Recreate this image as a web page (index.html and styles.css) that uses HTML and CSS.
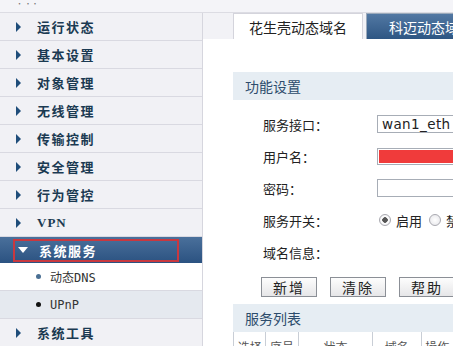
FILE: index.html
```html
<!DOCTYPE html>
<html lang="zh-CN">
<head>
    <meta charset="UTF-8">
    <title>动态DNS</title>
    <link rel="stylesheet" href="styles.css">
</head>
<body>
    <div class="topbar"><span class="dots">· ··</span></div>

    <div class="main">
        <div class="sidebar">
            <div class="menu-item"><span class="arrow"></span>运行状态</div>
            <div class="menu-item"><span class="arrow"></span>基本设置</div>
            <div class="menu-item"><span class="arrow"></span>对象管理</div>
            <div class="menu-item"><span class="arrow"></span>无线管理</div>
            <div class="menu-item"><span class="arrow"></span>传输控制</div>
            <div class="menu-item"><span class="arrow"></span>安全管理</div>
            <div class="menu-item"><span class="arrow"></span>行为管控</div>
            <div class="menu-item latin"><span class="arrow"></span>VPN</div>
            <div class="menu-item open">
                <div class="mark"><span class="arrow-down"></span>系统服务</div>
            </div>
            <div class="sub-item"><span class="bullet"></span>动态DNS</div>
            <div class="sub-item current"><span class="bullet"></span>UPnP</div>
            <div class="menu-item"><span class="arrow"></span>系统工具</div>
        </div>

        <div class="content">
            <div class="tabs">
                <div class="tab active">花生壳动态域名</div>
                <div class="tab">科迈动态域名</div>
            </div>

            <div class="panel">
                <div class="section-title">功能设置</div>

                <div class="form">
                    <div class="label">服务接口：</div>
                    <div class="field"><span class="input">wan1_eth</span></div>

                    <div class="label">用户名：</div>
                    <div class="field"><span class="input masked"></span></div>

                    <div class="label">密码：</div>
                    <div class="field"><span class="input"></span></div>

                    <div class="label">服务开关：</div>
                    <div class="field radios">
                        <span class="radio checked"></span><span>启用</span>
                        <span class="radio"></span><span>禁用</span>
                    </div>

                    <div class="label">域名信息：</div>
                    <div class="field"></div>
                </div>

                <div class="buttons">
                    <button>新增</button>
                    <button>清除</button>
                    <button>帮助</button>
                </div>

                <div class="section-title">服务列表</div>
                <div class="table-head">
                    <div class="cell c1">选择</div>
                    <div class="cell c2">序号</div>
                    <div class="cell c3">状态</div>
                    <div class="cell c4">域名</div>
                    <div class="cell c5">操作</div>
                </div>
            </div>
        </div>
    </div>
</body>
</html>
```

FILE: styles.css
```css
body {
    margin: 0;
    width: 453px;
    height: 346px;
    overflow: hidden;
    background: #f2f2f6;
    font-family: "Noto Sans CJK SC", "Noto Sans", sans-serif;
}
.topbar {
    height: 13px;
    background: #f4f4f8;
    border-bottom: 1px solid #dcdce3;
    box-sizing: border-box;
    position: relative;
}
.dots {
    position: absolute;
    left: 16px;
    top: 0;
    font-size: 7px;
    line-height: 7px;
    color: #777;
}
.main {
    display: flex;
    height: 333px;
}

/* left menu */
.sidebar {
    width: 203px;
    flex-shrink: 0;
    box-sizing: border-box;
    border-right: 1px solid #d6d6de;
    background: #f1f1f5;
}
.menu-item {
    height: 28px;
    box-sizing: border-box;
    border-bottom: 1px solid #d9d9e1;
    display: flex;
    align-items: center;
    padding-left: 16px;
    font-size: 13px;
    font-weight: 700;
    letter-spacing: 1.5px;
    color: #1b3a52;
}
.menu-item.latin {
    font-family: "Liberation Serif", serif;
    font-size: 13px;
    letter-spacing: 1px;
}
.arrow {
    width: 0;
    height: 0;
    border-top: 5px solid transparent;
    border-bottom: 5px solid transparent;
    border-left: 5px solid #1f4d7a;
    margin-right: 16px;
}
.menu-item.open {
    height: 26px;
    padding-left: 13px;
    border-bottom: none;
    background: linear-gradient(#4a709b, #2b5281);
    color: #fff;
}
.mark {
    width: 166px;
    height: 23px;
    box-sizing: border-box;
    border: 2px solid #c9383f;
    display: flex;
    align-items: center;
    padding-left: 3px;
}
.arrow-down {
    width: 0;
    height: 0;
    border-left: 5px solid transparent;
    border-right: 5px solid transparent;
    border-top: 6px solid #fff;
    margin-right: 11px;
}
.sub-item {
    height: 28px;
    box-sizing: border-box;
    border-bottom: 1px solid #d9d9e1;
    display: flex;
    align-items: center;
    padding-left: 36px;
    background: #fff;
    font-family: "DejaVu Sans Mono", "Noto Sans CJK SC", monospace;
    font-size: 12px;
    color: #333;
}
.sub-item.current {
    background: #e5e9ef;
}
.bullet {
    width: 5px;
    height: 5px;
    border-radius: 50%;
    background: #4a6f93;
    margin-right: 9px;
}
.sub-item.current .bullet {
    background: #111;
}

/* right side */
.content {
    flex: 1;
    background: #fff;
    display: flex;
    flex-direction: column;
    min-width: 0;
}
.tabs {
    height: 29px;
    box-sizing: border-box;
    background: #f2f2f6;
    display: flex;
    align-items: flex-end;
    gap: 3px;
    padding-left: 30px;
}
.tab {
    height: 26px;
    width: 130px;
    flex-shrink: 0;
    box-sizing: border-box;
    display: flex;
    align-items: center;
    justify-content: center;
    font-size: 14px;
    color: #fff;
    background: linear-gradient(#5278a3, #2e5683);
    border: 1px solid #9aa9bb;
    border-bottom: none;
    white-space: nowrap;
}
.tab.active {
    background: #fff;
    color: #222;
    border-color: #d4d4dc;
}
.panel {
    flex: 1;
    padding-top: 33px;
    padding-left: 30px;
}
.section-title {
    height: 28px;
    background: #e6edf3;
    display: flex;
    align-items: center;
    padding-left: 12px;
    font-size: 14px;
    color: #2d4c6c;
}
.form {
    display: grid;
    grid-template-columns: 114px 1fr;
    grid-auto-rows: 32px;
    margin-top: 8px;
    padding-left: 30px;
    font-size: 13px;
    color: #222;
}
.label,
.field {
    display: flex;
    align-items: center;
}
.field {
    overflow: hidden;
}
.input {
    display: flex;
    align-items: center;
    width: 100px;
    height: 18px;
    flex-shrink: 0;
    box-sizing: border-box;
    border: 1px solid #a7adb6;
    padding-left: 4px;
    font-family: "DejaVu Sans", sans-serif;
    font-size: 13.5px;
    letter-spacing: 0.4px;
    color: #222;
}
.input.masked {
    height: 17px;
    background: #f03b3b;
    box-shadow: inset 0 0 0 1px #fff;
}
.radios {
    gap: 5px;
    white-space: nowrap;
}
.radio {
    width: 12px;
    height: 12px;
    flex-shrink: 0;
    box-sizing: border-box;
    border-radius: 50%;
    border: 1px solid #a9a9b0;
    background: radial-gradient(#fff, #e4e4e8);
    margin-left: 2px;
}
.radio.checked {
    background: radial-gradient(#555 0 2.5px, #fff 3px, #e4e4e8);
}
.buttons {
    display: flex;
    gap: 13px;
    margin-top: 9px;
    padding-left: 28px;
}
button {
    width: 56px;
    height: 20px;
    flex-shrink: 0;
    padding: 0;
    border: 1px solid #8b8f96;
    background: linear-gradient(#fdfdfd, #e6e6e8);
    font-family: "Noto Sans CJK SC", sans-serif;
    font-size: 14px;
    color: #222;
    line-height: 18px;
    letter-spacing: 2px;
}
.buttons + .section-title {
    margin-top: 7px;
}
.table-head {
    display: flex;
    height: 14px;
    overflow: hidden;
    font-size: 12px;
    color: #555;
}
.cell {
    box-sizing: border-box;
    border-left: 1px solid #c9ced6;
    text-align: center;
    line-height: 30px;
}
.c1 { width: 40px; }
.c2 { width: 40px; }
.c3 { width: 92px; }
.c4 { width: 60px; }
.c5 { width: 40px; }
```
